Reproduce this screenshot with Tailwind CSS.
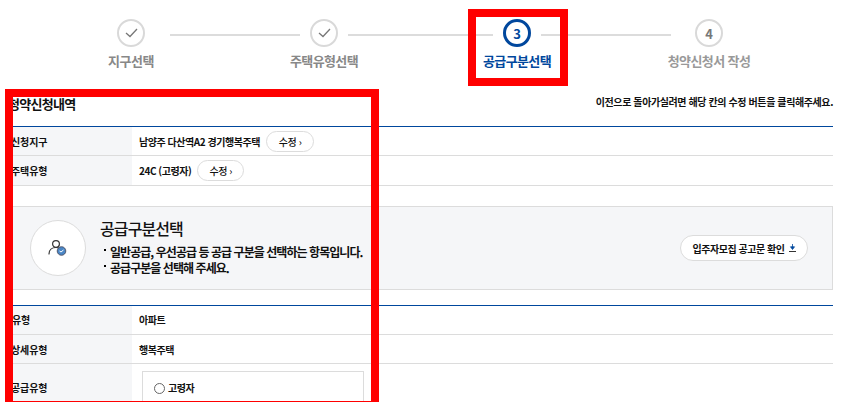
<!DOCTYPE html>
<html lang="ko"><head><meta charset="utf-8"><script src="https://cdn.jsdelivr.net/npm/@tailwindcss/browser@4"></script></head>
<body class="bg-white">
<div class="relative w-[848px] h-[402px] overflow-hidden font-['Noto_Sans_CJK_KR','Noto_Sans',sans-serif] text-[#111]">
  <div class="ml-[8px] w-[825px]">
    <!-- stepper -->
    <div class="flex h-[85px] pl-[109px] items-start">
      <div class="w-[28px] flex flex-col items-center pt-[19px] shrink-0">
        <div class="w-[28px] h-[28px] rounded-full border-[2px] border-[#d9d9d9] flex items-center justify-center">
          <svg width="13" height="10" viewBox="0 0 13 10" fill="none"><path d="M1 5l4 3.5L12 1" stroke="#777" stroke-width="1.3"/></svg>
        </div>
        <div class="mt-[5px] text-[13px] leading-[18px] font-bold text-[#888] tracking-[-0.5px] whitespace-nowrap">지구선택</div>
      </div>
      <div class="w-[130px] h-[2px] bg-[#dcdcdc] mt-[34px] ml-[25px] shrink-0"></div>
      <div class="w-[28px] ml-[10px] flex flex-col items-center pt-[19px] shrink-0">
        <div class="w-[28px] h-[28px] rounded-full border-[2px] border-[#d9d9d9] flex items-center justify-center">
          <svg width="13" height="10" viewBox="0 0 13 10" fill="none"><path d="M1 5l4 3.5L12 1" stroke="#777" stroke-width="1.3"/></svg>
        </div>
        <div class="mt-[5px] text-[13px] leading-[18px] font-bold text-[#888] tracking-[-0.6px] whitespace-nowrap">주택유형선택</div>
      </div>
      <div class="w-[145px] h-[2px] bg-[#dcdcdc] mt-[34px] ml-[10px] shrink-0"></div>
      <div class="w-[28px] ml-[10px] flex flex-col items-center pt-[19px] shrink-0">
        <div class="w-[28px] h-[28px] rounded-full border-[3px] border-[#00479d] flex items-center justify-center text-[13px] font-bold text-[#00479d] leading-none">3</div>
        <div class="mt-[5px] text-[13px] leading-[18px] font-bold text-[#00479d] tracking-[-0.6px] whitespace-nowrap">공급구분선택</div>
      </div>
      <div class="w-[130px] h-[2px] bg-[#dcdcdc] mt-[34px] ml-[10px] shrink-0"></div>
      <div class="w-[28px] ml-[24px] flex flex-col items-center pt-[19px] shrink-0">
        <div class="w-[28px] h-[28px] rounded-full border-[2px] border-[#d9d9d9] flex items-center justify-center text-[13px] font-bold text-[#777] leading-none">4</div>
        <div class="mt-[5px] text-[13px] leading-[18px] font-bold text-[#999] tracking-[-0.6px] whitespace-nowrap">청약신청서 작성</div>
      </div>
    </div>

    <!-- heading -->
    <div class="flex justify-between items-center h-[41px] pb-[4px]">
      <div class="text-[13px] font-bold leading-[18px] tracking-[-0.7px]">청약신청내역</div>
      <div class="text-[10px] font-bold leading-[16px] tracking-[-0.4px] pb-[3px]">이전으로 돌아가실려면 해당 칸의 수정 버튼을 클릭해주세요.</div>
    </div>

    <!-- table 1 -->
    <div class="border-t border-[#00479d] text-[10px] font-bold tracking-[-0.45px]">
      <div class="flex h-[29px] border-b border-[#dcdcdc]">
        <div class="w-[124px] bg-[#f5f6f8] flex items-center pl-[3px] tracking-[-0.1px]">신청지구</div>
        <div class="flex items-center pl-[7px] gap-[6px]">
          <span>남양주 다산역A2 경기행복주택</span>
          <span class="w-[48px] h-[21px] rounded-full border border-[#dcdcdc] flex items-center justify-center font-medium">수정 ›</span>
        </div>
      </div>
      <div class="flex h-[30px] border-b border-[#dcdcdc]">
        <div class="w-[124px] bg-[#f5f6f8] flex items-center pl-[3px] tracking-[-0.1px]">주택유형</div>
        <div class="flex items-center pl-[7px] gap-[6px]">
          <span>24C (고령자)</span>
          <span class="w-[47px] h-[21px] rounded-full border border-[#dcdcdc] flex items-center justify-center font-medium">수정 ›</span>
        </div>
      </div>
    </div>

    <!-- info box -->
    <div class="mt-[20px] h-[84px] border border-[#dcdcdc] bg-[#f5f6f8] flex items-center pl-[21px] pr-[24px]">
      <div class="w-[56px] h-[56px] rounded-full bg-white border border-[#dcdcdc] flex items-center justify-center shrink-0">
        <svg width="20" height="18" viewBox="0 0 20 18" fill="none">
          <circle cx="8" cy="5" r="3.4" stroke="#333" stroke-width="1.2"/>
          <path d="M1 15c0-4 3-6.5 7-6.5 1.5 0 2.5.3 3.5.8" stroke="#333" stroke-width="1.2" stroke-linecap="round"/>
          <circle cx="13.5" cy="12" r="4.3" fill="#4a86c5" stroke="#445" stroke-width=".8"/>
          <path d="M11.5 12l1.5 1 2.5-2" stroke="#fff" stroke-width="1"/>
        </svg>
      </div>
      <div class="ml-[14px] flex-1 -mt-[2px]">
        <div class="text-[16px] font-medium leading-[20px] tracking-[-0.9px]">공급구분선택</div>
        <div class="mt-[6px] text-[12px] font-bold leading-[16px] tracking-[-0.95px]">
          <div class="flex"><span class="w-[2px] h-[2px] bg-black mt-[5px] ml-[4px] mr-[4px] shrink-0"></span><span>일반공급, 우선공급 등 공급 구분을 선택하는 항목입니다.</span></div>
          <div class="flex"><span class="w-[2px] h-[2px] bg-black mt-[5px] ml-[4px] mr-[4px] shrink-0"></span><span>공급구분을 선택해 주세요.</span></div>
        </div>
      </div>
      <div class="w-[128px] h-[26px] rounded-full bg-white border border-[#dcdcdc] flex items-center justify-center gap-[4px] text-[10px] font-bold tracking-[-0.45px] shrink-0">
        입주자모집 공고문 확인
        <svg width="7" height="8" viewBox="0 0 7 8"><path d="M3.5 0v4M1.5 2.8h4L3.5 5.5z" fill="#00479d" stroke="#00479d" stroke-width=".8"/><path d="M0 7.5h7" stroke="#333"/></svg>
      </div>
    </div>

    <!-- table 2 -->
    <div class="mt-[15px] border-t border-[#00479d] text-[10px] font-bold tracking-[-0.45px]">
      <div class="flex h-[29px] border-b border-[#dcdcdc]">
        <div class="w-[124px] bg-[#f5f6f8] flex items-center pl-[4px] pb-[2px] tracking-[-0.1px]">유형</div>
        <div class="flex items-center pl-[7px] pb-[2px]">아파트</div>
      </div>
      <div class="flex h-[29px] border-b border-[#dcdcdc]">
        <div class="w-[124px] bg-[#f5f6f8] flex items-center pl-[3px] tracking-[-0.1px]">상세유형</div>
        <div class="flex items-center pl-[7px]">행복주택</div>
      </div>
      <div class="flex h-[60px]">
        <div class="w-[124px] bg-[#f5f6f8] pt-[16px] pl-[3px] tracking-[-0.1px]">공급유형</div>
        <div class="pl-[10px] pt-[7px]">
          <div class="w-[222px] h-[60px] border border-[#dcdcdc] pl-[11px] pt-[8px] flex items-start gap-[3px]">
            <span class="w-[11px] h-[11px] rounded-full border border-[#666] mt-[3px]"></span>
            <span class="leading-[16px]">고령자</span>
          </div>
        </div>
      </div>
    </div>
  </div>

  <!-- red annotation boxes -->
  <div class="absolute left-[468px] top-[9px] w-[100px] h-[77px] border-[8px] border-[#ff0000]"></div>
  <div class="absolute left-[5px] top-[89px] w-[374px] h-[320px] border-[8px] border-[#ff0000]"></div>
</div>
</body></html>
